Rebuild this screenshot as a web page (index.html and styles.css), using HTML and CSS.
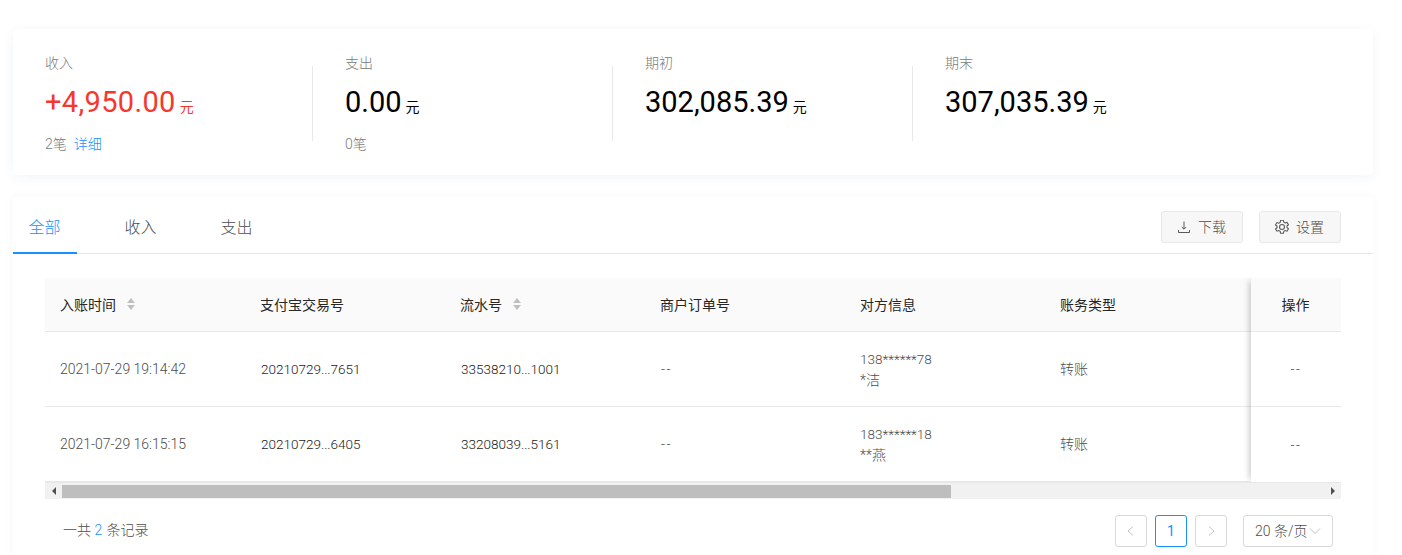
FILE: index.html
```html
<!DOCTYPE html>
<html lang="zh-CN">
<head>
<meta charset="utf-8">
<title>账务明细</title>
<link rel="stylesheet" href="styles.css">
</head>
<body>
<section class="summary">
  <div class="stat">
    <div class="stat-label">收入</div>
    <div class="stat-value income">+4,950.00<span class="unit">元</span></div>
    <div class="stat-foot">2笔<a class="link">详细</a></div>
  </div>
  <div class="stat">
    <div class="stat-label">支出</div>
    <div class="stat-value">0.00<span class="unit">元</span></div>
    <div class="stat-foot">0笔</div>
  </div>
  <div class="stat">
    <div class="stat-label">期初</div>
    <div class="stat-value">302,085.39<span class="unit">元</span></div>
  </div>
  <div class="stat">
    <div class="stat-label">期末</div>
    <div class="stat-value">307,035.39<span class="unit">元</span></div>
  </div>
</section>

<section class="panel">
  <div class="tabbar">
    <div class="tabs">
      <div class="tab active">全部</div>
      <div class="tab">收入</div>
      <div class="tab">支出</div>
    </div>
    <div class="actions">
      <button class="btn">
        <svg class="btn-icon" viewBox="0 0 14 14" fill="none" stroke="#595959" stroke-width="1"><path d="M7 1.500v7.500M4.800 7l2.200 2.200L9.200 7M1.500 10v2.500h11V10"/></svg><span class="btn-text">下载</span>
      </button>
      <button class="btn">
        <svg class="btn-icon" viewBox="0.500 0.700 13 13" fill="none" stroke="#595959" stroke-width="1"><path d="M5.700 1h2.600l.4 1.800 1.200.7 1.800-.6 1.300 2.200-1.400 1.200v1.400l1.400 1.200-1.300 2.200-1.800-.6-1.200.7-.4 1.800H5.700l-.4-1.800-1.200-.7-1.800.6L1 9.100l1.400-1.200V6.500L1 5.300l1.300-2.200 1.800.6 1.200-.7z"/><circle cx="7" cy="7.200" r="2.300"/></svg><span class="btn-text">设置</span>
      </button>
    </div>
  </div>

  <div class="table-wrap">
    <div class="table-row head">
      <div class="cell sortable">入账时间<span class="sorter"></span></div>
      <div class="cell">支付宝交易号</div>
      <div class="cell sortable">流水号<span class="sorter"></span></div>
      <div class="cell">商户订单号</div>
      <div class="cell">对方信息</div>
      <div class="cell">账务类型</div>
    </div>
    <div class="table-row">
      <div class="cell muted num">2021-07-29 19:14:42</div>
      <div class="cell num id">20210729...7651</div>
      <div class="cell num id">33538210...1001</div>
      <div class="cell muted num dash">--</div>
      <div class="cell muted stack"><span class="party">138******78</span><span>*洁</span></div>
      <div class="cell muted">转账</div>
    </div>
    <div class="table-row">
      <div class="cell muted num">2021-07-29 16:15:15</div>
      <div class="cell num id">20210729...6405</div>
      <div class="cell num id">33208039...5161</div>
      <div class="cell muted num dash">--</div>
      <div class="cell muted stack"><span class="party">183******18</span><span>**燕</span></div>
      <div class="cell muted">转账</div>
    </div>
    <div class="fixed-col">
      <div class="fixed-cell head">操作</div>
      <div class="fixed-cell muted dash">--</div>
      <div class="fixed-cell muted dash">--</div>
    </div>
  </div>

  <div class="scrollbar">
    <span class="arrow left"></span>
    <div class="track"><div class="thumb"></div></div>
    <span class="arrow right"></span>
  </div>

  <div class="footer">
    <div class="total">一共 <em>2</em> 条记录</div>
    <div class="pager">
      <span class="page-btn"><svg width="12" height="12" viewBox="0 0 12 12" fill="none" stroke="#c4c4c4"><path d="M8 1.500L3 6l5 4.500"/></svg></span>
      <span class="page-btn current">1</span>
      <span class="page-btn"><svg width="12" height="12" viewBox="0 0 12 12" fill="none" stroke="#c4c4c4"><path d="M4 1.500L9 6l-5 4.500"/></svg></span>
      <span class="page-size"><span class="size-text">20 条/页</span><svg width="12" height="12" viewBox="0 0 12 12" fill="none" stroke="#bfbfbf"><path d="M1 3.500l5 5 5-5"/></svg></span>
    </div>
  </div>
</section>
</body>
</html>
```
FILE: styles.css
```css
* { box-sizing: border-box; }
html, body { height: 555px; overflow: hidden; }
body {
  margin: 0;
  padding: 29px 29px 0 13px;
  background: #fff;
  font-family: Roboto, "Noto Sans CJK SC", sans-serif;
  font-size: 14px;
  font-weight: 300;
  color: #262626;
}
.summary {
  display: flex;
  height: 146px;
  padding: 25px 0 0 32px;
  border-radius: 4px;
  background: #fff;
  box-shadow: 0 2px 12px rgba(40, 70, 160, .06);
}
.stat {
  position: relative;
  width: 300px;
}
.stat + .stat::before {
  content: "";
  position: absolute;
  left: -33px;
  top: 12px;
  width: 1px;
  height: 75px;
  background: #e8e8e8;
}
.stat-label {
  height: 18px;
  line-height: 18px;
  color: #7a7a7a;
}
.stat-value {
  margin-top: 12px;
  height: 36px;
  line-height: 36px;
  font-size: 29px;
  font-weight: 400;
  color: #000;
}
.stat-value.income { color: #f5382e; letter-spacing: .35px; }
.unit {
  margin-left: 4px;
  font-size: 14px;
  letter-spacing: 0;
}
.stat-foot {
  margin-top: 15px;
  height: 18px;
  line-height: 18px;
  color: #7a7a7a;
}
.link { margin-left: 7px; color: #1890ff; }

.panel {
  margin-top: 22px;
  height: 358px;
  background: #fff;
  box-shadow: 0 0 10px rgba(40, 70, 160, .04);
}
.tabbar {
  display: flex;
  justify-content: space-between;
  height: 57px;
  border-bottom: 1px solid #e8e8e8;
}
.tabs { display: flex; }
.tab {
  width: 64px;
  margin-right: 32px;
  height: 57px;
  padding: 20px 1px 0 0;
  line-height: 22px;
  font-size: 16px;
  text-align: center;
  color: #4d4d4d;
}
.tab.active {
  color: #1890ff;
  border-bottom: 2px solid #1890ff;
}
.actions {
  display: flex;
  gap: 16px;
  padding: 14px 32px 0 0;
}
.btn {
  display: flex;
  align-items: center;
  justify-content: center;
  width: 82px;
  height: 32px;
  padding: 0 1px 0 0;
  border: 1px solid #e8e8e8;
  border-radius: 3px;
  background: #f7f7f7;
  font: inherit;
  color: #4d4d4d;
}
.btn-text { padding-bottom: 2px; }
.btn-icon { width: 14px; height: 14px; margin-right: 7px; }

.table-wrap {
  position: relative;
  margin: 24px 32px 0;
  width: 1296px;
  height: 204px;
  overflow: hidden;
}
.table-row {
  display: flex;
  height: 75px;
  border-bottom: 1px solid #e8e8e8;
}
.table-row.head {
  height: 54px;
  background: #fafafa;
}
.table-row:last-of-type { border-bottom: 0; }
.cell {
  display: flex;
  align-items: center;
  flex: 0 0 200px;
  padding: 0 0 2px 15px;
  font-size: 14px;
}
.head .cell { color: #262626; font-weight: 400; }
.muted { color: #4d4d4d; }
.cell.num { padding-bottom: 0; }
.cell.id { padding-left: 16px; font-size: 13.500px; color: #1a1a1a; }
.dash { letter-spacing: 1.500px; }
.cell.dash { padding-left: 16px; }
.cell.stack {
  flex-direction: column;
  align-items: flex-start;
  justify-content: center;
  padding: 2px 0 0 15px;
  line-height: 21px;
}
.party { font-size: 13.500px; }
.sorter {
  display: inline-block;
  position: relative;
  width: 8px;
  height: 12px;
  margin-left: 11px;
}
.sorter::before, .sorter::after {
  content: "";
  position: absolute;
  left: 0;
  border-left: 4px solid transparent;
  border-right: 4px solid transparent;
}
.sorter::before { top: 0; border-bottom: 5px solid #bfbfbf; }
.sorter::after { bottom: 0; border-top: 5px solid #bfbfbf; }
.fixed-col {
  position: absolute;
  top: 0;
  right: 0;
  width: 90px;
  background: #fff;
  box-shadow: -5px 0 6px -3px rgba(0, 0, 0, .2);
}
.fixed-cell {
  display: flex;
  align-items: center;
  justify-content: center;
  height: 75px;
  border-bottom: 1px solid #e8e8e8;
}
.fixed-cell:last-child { border-bottom: 0; }
.fixed-cell.head {
  height: 54px;
  padding: 0 1px 2px 0;
  background: #fafafa;
  font-weight: 400;
}

.scrollbar {
  display: flex;
  align-items: center;
  margin: 0 32px;
  width: 1296px;
  height: 17px;
  background: #f1f1f1;
  border-top: 1px solid #e8e8e8;
}
.arrow {
  flex: 0 0 17px;
  display: flex;
  justify-content: center;
}
.arrow::before {
  content: "";
  border-top: 4px solid transparent;
  border-bottom: 4px solid transparent;
}
.arrow.left::before { border-right: 4px solid #505050; }
.arrow.right::before { border-left: 4px solid #505050; }
.track { flex: 1; height: 13px; }
.thumb {
  width: 889px;
  height: 13px;
  background: #bebebe;
}

.footer {
  display: flex;
  justify-content: space-between;
  padding: 16px 40px 0 50px;
}
.total { padding-top: 4px; color: #4d4d4d; }
.total em { padding-right: 1px; font-style: normal; color: #1890ff; }
.pager { display: flex; gap: 8px; color: #4d4d4d; }
.page-btn {
  display: flex;
  align-items: center;
  justify-content: center;
  width: 32px;
  height: 32px;
  border: 1px solid #d9d9d9;
  border-radius: 3px;
}
.page-btn.current {
  border-color: #1890ff;
  color: #1890ff;
  font-weight: 400;
}
.page-size {
  display: flex;
  align-items: center;
  justify-content: space-between;
  width: 90px;
  height: 32px;
  margin-left: 8px;
  padding: 0 11px;
  border: 1px solid #d9d9d9;
  border-radius: 3px;
  white-space: nowrap;
}
.size-text { padding-bottom: 2px; }
```
